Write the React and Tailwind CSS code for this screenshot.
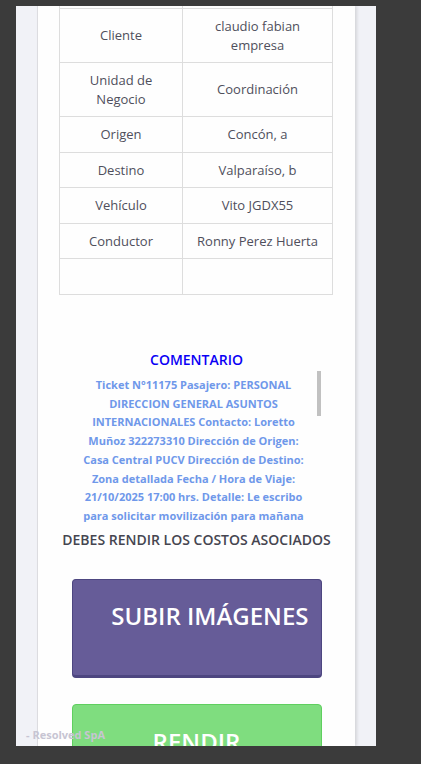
import React from 'react';

const rows = [
    { label: 'Fecha', value: '21/10/2025', h: 'h-[36px]' },
    { label: 'Cliente', value: 'claudio fabian empresa', h: 'h-[54px]' },
    { label: 'Unidad de Negocio', value: 'Coordinación', h: 'h-[54px]' },
    { label: 'Origen', value: 'Concón, a', h: 'h-[36px]' },
    { label: 'Destino', value: 'Valparaíso, b', h: 'h-[35px]' },
    { label: 'Vehículo', value: 'Vito JGDX55', h: 'h-[36px]' },
    { label: 'Conductor', value: 'Ronny Perez Huerta', h: 'h-[35px]' },
    { label: '\u00a0', value: '\u00a0', h: 'h-[36px]' },
];

const comentario = [
    'Ticket N°11175 Pasajero: PERSONAL',
    'DIRECCION GENERAL ASUNTOS',
    'INTERNACIONALES Contacto: Loretto',
    'Muñoz 322273310 Dirección de Origen:',
    'Casa Central PUCV Dirección de Destino:',
    'Zona detallada Fecha / Hora de Viaje:',
    '21/10/2025 17:00 hrs. Detalle: Le escribo',
    'para solicitar movilización para mañana',
];

const App = () => {
    return (
        <div
            className="h-[764px] w-[421px] overflow-hidden bg-[#3b3b3b] pt-[6px] pl-[16px]"
            style={{ fontFamily: '"Open Sans", "Noto Sans", sans-serif' }}
        >
            <div className="relative h-[740px] w-[360px] overflow-hidden bg-[#f1f2f7] px-[21px]">
                <div className="flow-root h-full border-l border-[#dcdce0] bg-[#fefefe] shadow-[2px_0_3px_rgba(0,0,0,0.12)]">
                    {/* Detalle del servicio */}
                    <div className="-mt-[34px] pl-[21px]">
                        <table className="w-[274px] border-collapse text-[13px] text-[#4f4f5c]">
                            <tbody>
                                {rows.map((row, i) => (
                                    <tr key={i} className={row.h}>
                                        <td className="w-[123px] border border-[#dddddd] px-[8px] text-center leading-[18.6px]">
                                            {row.label === 'Unidad de Negocio' ? (
                                                <>Unidad de<br />Negocio</>
                                            ) : row.label}
                                        </td>
                                        <td className="border border-[#dddddd] px-[8px] text-center leading-[18.6px]">
                                            {row.value === 'claudio fabian empresa' ? (
                                                <>claudio fabian<br />empresa</>
                                            ) : row.value}
                                        </td>
                                    </tr>
                                ))}
                            </tbody>
                        </table>
                    </div>

                    {/* Comentario */}
                    <h3 className="mt-[55px] text-center text-[14px] font-semibold leading-[20px] text-[#0a00f5]">
                        COMENTARIO
                    </h3>
                    <div className="relative mx-auto mt-[1px] h-[151px] w-[252px] overflow-hidden">
                        <div className="pr-[6px] pt-[5px] text-center text-[11px] font-bold leading-[18.7px] text-[#6f98ea]">
                            {comentario.map((line, i) => (
                                <div key={i} className="whitespace-nowrap">{line}</div>
                            ))}
                        </div>
                        <div className="absolute right-[2px] top-0 h-[45px] w-[4px] bg-[#c1c1c1]" />
                    </div>

                    <p className="mt-[7px] text-center text-[14px] font-semibold text-[#454550]">
                        DEBES RENDIR LOS COSTOS ASOCIADOS
                    </p>

                    {/* Acciones */}
                    <div className="mt-[29px] flex flex-col items-center gap-[26px]">
                        <button className="flex h-[99px] w-[250px] flex-col items-end justify-start rounded-[4px] border border-b-[3px] border-[#4d4680] bg-[#665c98] pt-[20px] pr-[12px] text-[24px] font-semibold leading-[32px] text-white">
                            SUBIR IMÁGENES
                        </button>
                        <button className="flex h-[99px] w-[250px] flex-col items-center justify-start rounded-[4px] border border-[#5fcf5f] bg-[#7fdd7f] pt-[21px] text-[24px] font-semibold leading-[32px] text-white">
                            RENDIR
                        </button>
                    </div>
                </div>

                <span className="absolute left-[10px] top-[721px] text-[11px] font-bold text-[#c7c5d3]">
                    - Resolved SpA
                </span>
            </div>
        </div>
    );
};

export default App;
